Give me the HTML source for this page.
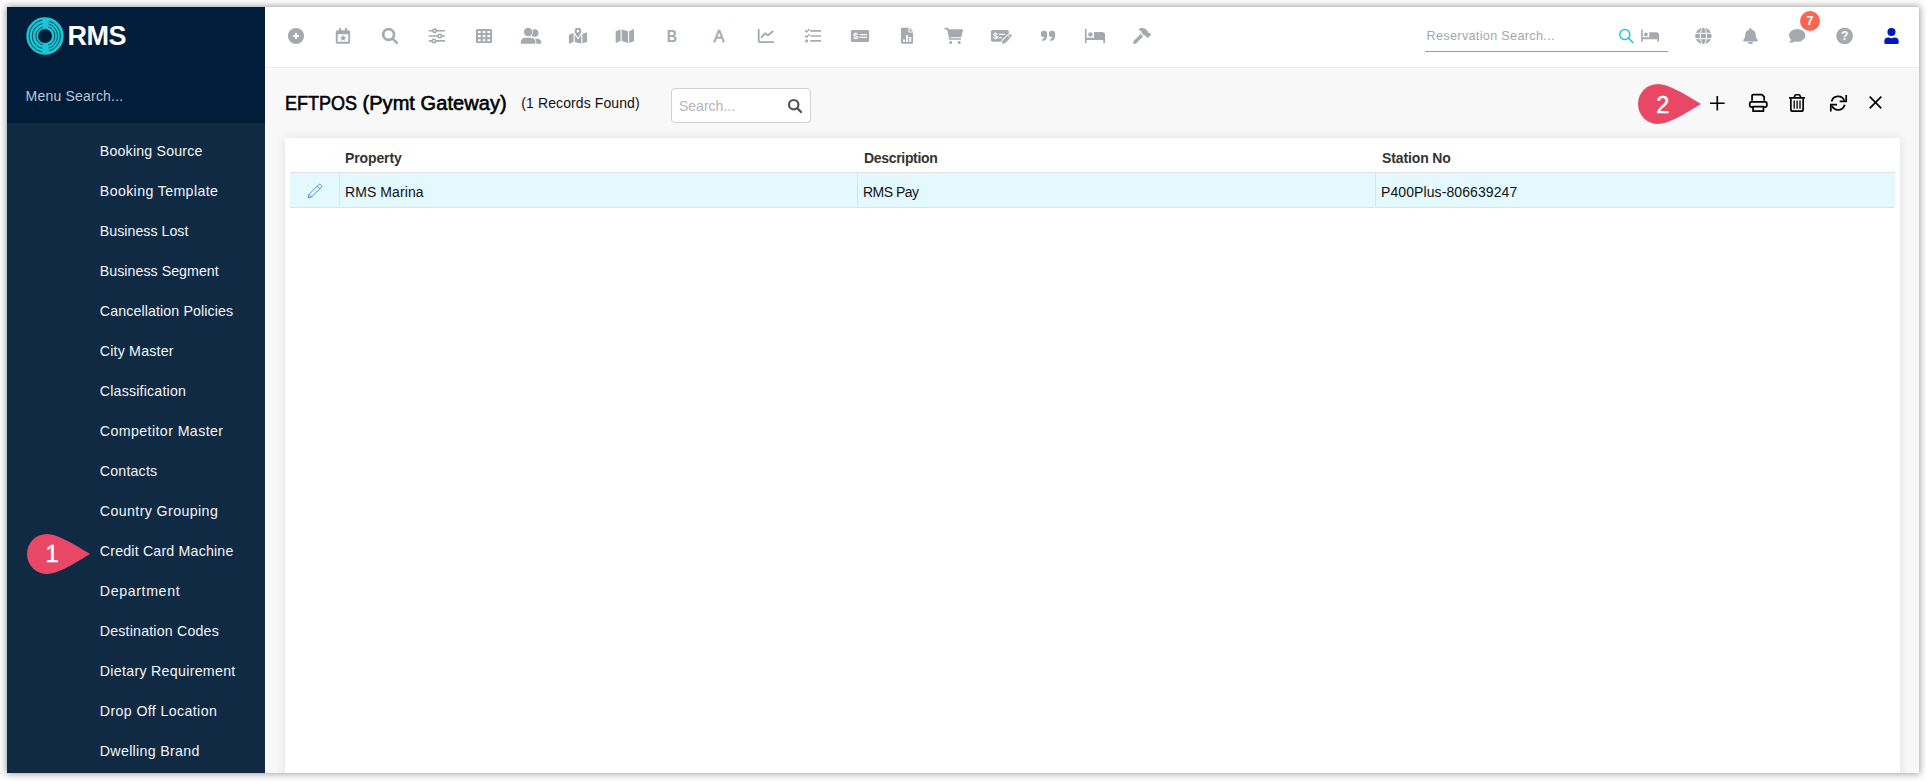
<!DOCTYPE html>
<html lang="en">
<head>
<meta charset="utf-8">
<title>EFTPOS (Pymt Gateway)</title>
<style>
*{box-sizing:border-box;margin:0;padding:0}
html,body{width:1927px;height:781px;overflow:hidden;background:#fff}
body{font-family:"Liberation Sans",sans-serif;color:#111;position:relative}
#frame{position:absolute;left:7px;top:7px;width:1912px;height:766px;background:#f8f8f9;overflow:hidden}
#shadow{position:absolute;left:7px;top:7px;width:1912px;height:766px;box-shadow:0 0 7px 1px rgba(0,0,0,.38)}
/* sidebar */
#side{position:absolute;left:0;top:0;width:258px;height:766px;background:#102a43}
#sidehead{position:absolute;left:0;top:0;width:258px;height:116px;background:#011d39}
#logotext{position:absolute;left:60.5px;top:13.6px;font-weight:700;font-size:27px;line-height:30px;color:#fff;letter-spacing:-.45px}
#msearch{position:absolute;left:18.6px;top:79.1px;font-size:14px;line-height:20px;color:#bcc6d1;letter-spacing:.2px}
#menu{position:absolute;left:0;top:116px;width:258px;list-style:none}
#menu li{height:40px;line-height:20px;padding:17.9px 0 0 92.8px;font-size:14.2px;letter-spacing:.19px;color:#f2f5f8;white-space:nowrap}
/* topbar */
#top{position:absolute;left:258px;top:0;width:1654px;height:61px;background:#fff;border-bottom:1px solid #ececf1}
.ti{position:absolute;top:17px;width:24px;height:24px;margin-left:-12px}
.ti svg{display:block;width:24px;height:24px;fill:#a6a9af}
.tx{font-size:16.5px;line-height:25px;text-align:center;color:#a6a9af}
#badge{position:absolute;left:1535.1px;top:3.9px;width:20px;height:20px;border-radius:50%;background:#ff6450;color:#fff;font-weight:700;font-size:12.5px;line-height:21px;text-align:center}
#rsearch{position:absolute;left:1160px;top:16px;width:243px;height:29px;border-bottom:1px solid #9a9da6}
#rsearch span{position:absolute;left:1.6px;top:5px;font-size:12.6px;letter-spacing:.34px;line-height:16px;color:#a3a6ad;white-space:nowrap}
/* content */
#title{position:absolute;left:278.2px;top:82.3px;font-size:20px;line-height:28px;font-weight:400;-webkit-text-stroke:.6px #000;color:#000;white-space:nowrap;letter-spacing:-.3px}
#count{position:absolute;left:514.3px;top:86.3px;font-size:14px;letter-spacing:.1px;line-height:20px;color:#111;white-space:nowrap}
#gsearch{position:absolute;left:664px;top:81px;width:140px;height:35px;border:1px solid #cfd1d4;border-radius:4px;background:#fff}
#gsearch span{position:absolute;left:7px;top:8px;font-size:14px;line-height:18px;color:#b3b5ba}
#card{position:absolute;left:278px;top:131px;width:1615px;height:700px;background:#fff;box-shadow:0 0 10px rgba(0,0,0,.1)}
.th{position:absolute;top:10px;font-size:14px;line-height:20px;font-weight:700;color:#333;white-space:nowrap;letter-spacing:-.12px}
#row{position:absolute;left:5px;top:34px;width:1605px;height:36px;background:#e4f9fe;border-top:1px solid #e8e0e0;border-bottom:1px solid #e8e0e0}
.td{position:absolute;top:0;height:34px;border-left:1px solid #e8e0e0;padding:10px 0 0 5px;font-size:14px;letter-spacing:.09px;line-height:18px;color:#111;white-space:nowrap}
.ai{position:absolute;top:84px;width:24px;height:24px;margin-left:-12px}
.ai svg{display:block;width:24px;height:24px}
.marker{position:absolute;width:62px;height:40px}
.marker svg{display:block}
</style>
</head>
<body>
<div id="shadow"></div>
<div id="frame">
  <div id="side">
    <div id="sidehead">
      <svg id="logo" style="position:absolute;left:18.3px;top:8.85px" width="40" height="40" viewBox="-20 -20 40 40">
        <circle r="12.85" fill="none" stroke="#1cc5d1" stroke-width="11.7"/>
        <g fill="none" stroke="#022f4b" stroke-width=".85">
          <path d="M-2.8 -16A16.3 16.3 0 0 0 -2.8 16"/>
          <path d="M-2.6 -12.4A12.65 12.65 0 0 0 -2.6 12.4"/>
          <path d="M-2.2 -8.8A9.05 9.05 0 0 0 -2.2 8.8"/>
          <path d="M3.3 -9.1A9.65 9.65 0 0 1 3.3 9.1"/>
          <path d="M3.6 -12.1A12.65 12.65 0 0 1 3.6 12.1"/>
          <path d="M4 -14.9A15.45 15.45 0 0 1 4 14.9"/>
        </g>
      </svg>
      <div id="logotext">RMS</div>
      <div id="msearch">Menu Search...</div>
    </div>
    <ul id="menu">
      <li>Booking Source</li>
      <li style="letter-spacing:0.37px">Booking Template</li>
      <li style="letter-spacing:0.02px">Business Lost</li>
      <li style="letter-spacing:0.04px">Business Segment</li>
      <li style="letter-spacing:0.12px">Cancellation Policies</li>
      <li>City Master</li>
      <li>Classification</li>
      <li style="letter-spacing:0.41px">Competitor Master</li>
      <li>Contacts</li>
      <li style="letter-spacing:0.4px">Country Grouping</li>
      <li>Credit Card Machine</li>
      <li style="letter-spacing:0.63px">Department</li>
      <li>Destination Codes</li>
      <li style="letter-spacing:0.3px">Dietary Requirement</li>
      <li style="letter-spacing:0.38px">Drop Off Location</li>
      <li style="letter-spacing:0.32px">Dwelling Brand</li>
    </ul>
    <div class="marker" style="left:19.6px;top:527px">
      <svg width="64" height="40" viewBox="0 0 64 40"><path d="M20 0C30 0 45 9 63 20C45 31 30 40 20 40A20 20 0 0 1 20 0Z" fill="#e84866"/><text x="25" y="28.3" font-family="Liberation Sans, sans-serif" font-size="23.5" fill="#fff" stroke="#fff" stroke-width=".5" text-anchor="middle">1</text></svg>
    </div>
  </div>
  <div style="position:absolute;left:258px;top:0;width:1px;height:766px;background:#fff"></div>
  <div id="top">
    <!-- toolbar icons: each 24x24 box centred on icon centre -->
    <div class="ti" style="left:31px"><svg viewBox="0 0 24 24"><circle cx="12" cy="12" r="8.1"/><path d="M9.1 11h1.9V9.1h2V11h1.9v2H13v1.9h-2V13H9.1z" fill="#fff"/></svg></div>
    <div class="ti" style="left:78px"><svg viewBox="0 0 24 24"><path fill-rule="evenodd" d="M8 4h2v2.3h4V4h2v2.3h1.6a1.6 1.6 0 0 1 1.6 1.6v10.3a1.6 1.6 0 0 1-1.6 1.6H6.4a1.6 1.6 0 0 1-1.6-1.6V7.9a1.6 1.6 0 0 1 1.6-1.6H8zM6.7 10.2v7.6h10.6v-7.6z"/><path d="M12 10.9l.95 1.95 2.15.3-1.55 1.5.37 2.15L12 15.8l-1.92 1 .37-2.15-1.55-1.5 2.15-.3z"/></svg></div>
    <div class="ti" style="left:125px"><svg viewBox="0 0 24 24"><circle cx="10.6" cy="10.5" r="5.4" fill="none" stroke="#a6a9af" stroke-width="2.7"/><path d="M14.6 14.6l4.3 4.3" stroke="#a6a9af" stroke-width="2.6" stroke-linecap="round"/></svg></div>
    <div class="ti" style="left:172px"><svg viewBox="0 0 24 24"><g fill="none" stroke="#a6a9af" stroke-width="1.6"><path d="M3.8 6.8H20M3.8 12H20M3.8 16.9H20"/><circle cx="9.7" cy="6.8" r="1.7" fill="#fff"/><circle cx="14.8" cy="12" r="1.7" fill="#fff"/><circle cx="8.9" cy="16.9" r="1.7" fill="#fff"/></g></svg></div>
    <div class="ti" style="left:219px"><svg viewBox="0 0 24 24"><path fill-rule="evenodd" d="M5.4 5.1h13.2A1.5 1.5 0 0 1 20.1 6.6v10.8a1.5 1.5 0 0 1-1.5 1.5H5.4a1.5 1.5 0 0 1-1.5-1.5V6.6A1.5 1.5 0 0 1 5.4 5.1zM6 6.9v2.2h2.7V6.9zM10.7 6.9v2.2h2.7V6.9zM15.4 6.9v2.2h2.7V6.9zM6 11.1v2.2h2.7v-2.2zM10.7 11.1v2.2h2.7v-2.2zM15.4 11.1v2.2h2.7v-2.2zM6 15.3v2h2.7v-2zM10.7 15.3v2h2.7v-2zM15.4 15.3v2h2.7v-2z"/></svg></div>
    <div class="ti" style="left:266px"><svg viewBox="0 0 24 24"><circle cx="15.7" cy="9.1" r="3.8"/><path d="M12.6 19.7c0-3.2 1-4.9 3.9-4.9h1.7c2.7 0 4.1 1.7 4.1 3.9v0.2a0.8 0.8 0 0 1-0.8 0.8z"/><circle cx="9.1" cy="8" r="4.8" fill="#fff"/><path d="M0.9 20.5v-2c0-3.2 2.2-5.6 5.3-5.6h5.8c3.1 0 5.3 2.4 5.3 5.6v2z" fill="#fff"/><circle cx="9.1" cy="8" r="4.2"/><path d="M1.7 18.5c0-2.8 1.9-4.8 4.6-4.8h5.6c2.7 0 4.6 2 4.6 4.8v0.4a0.8 0.8 0 0 1-0.8 0.8H2.5a0.8 0.8 0 0 1-0.8-0.8z"/></svg></div>
    <div class="ti" style="left:313px"><svg viewBox="0 0 24 24"><path d="M2.9 10.8L7.5 9.1v8.9L2.9 19.7zM8.7 9.4h6.6v10.3L8.7 17.9zM16.4 10L21.1 8.3v9.5l-4.7 1.8z"/><path d="M12 3.8a3.3 3.3 0 0 1 3.3 3.3c0 2-2 4.9-3.3 6.6c-1.3-1.7-3.3-4.6-3.3-6.6A3.3 3.3 0 0 1 12 3.8z" fill="#fff" stroke="#fff" stroke-width="2.2"/><path fill-rule="evenodd" d="M12 3.8a3.3 3.3 0 0 1 3.3 3.3c0 2-2 4.9-3.3 6.6c-1.3-1.7-3.3-4.6-3.3-6.6A3.3 3.3 0 0 1 12 3.8zM12 5.8a1.3 1.3 0 1 0 0 2.6a1.3 1.3 0 0 0 0-2.6z"/></svg></div>
    <div class="ti" style="left:360px"><svg viewBox="0 0 24 24"><path d="M2.7 7.2L7.6 5.4v11.7L2.7 18.9zM8.7 5.4L15 7.2v11.8L8.7 17.1zM16.1 7.2L21 5v12.3l-4.9 1.7z"/></svg></div>
    <div class="ti tx" style="left:407px;font-weight:700;transform:scaleX(.86)">B</div>
    <div class="ti tx" style="left:454px;-webkit-text-stroke:.5px #a6a9af">A</div>
    <div class="ti" style="left:501px"><svg viewBox="0 0 24 24"><path d="M4.7 4.9v11.6a1.6 1.6 0 0 0 1.6 1.6H20" fill="none" stroke="#a6a9af" stroke-width="1.8"/><path d="M7.6 13.2l3.8-4l2.3 2.2l4.9-4" fill="none" stroke="#a6a9af" stroke-width="1.9" stroke-linejoin="round" stroke-linecap="round"/></svg></div>
    <div class="ti" style="left:548px"><svg viewBox="0 0 24 24"><g fill="none" stroke="#a6a9af"><path d="M9.3 6.8H20M9.3 12H20M9.3 16.9H20" stroke-width="1.7"/><path d="M4 6.5l1.5 1.5l2.9-3M4 11.7l1.5 1.5l2.9-3" stroke-width="1.5"/></g><circle cx="5.6" cy="16.9" r="1.6"/></svg></div>
    <div class="ti" style="left:595px"><svg viewBox="0 0 24 24"><rect x="2.9" y="5.9" width="18.2" height="12.1" rx="1.7"/><path d="M11.6 10h7.4v1.3h-7.4zM11.6 12.7h7.4v1.3h-7.4z" fill="#fff"/><text x="7.6" y="15.3" font-family="Liberation Sans, sans-serif" font-weight="700" font-size="9.5" fill="#fff" text-anchor="middle">$</text></svg></div>
    <div class="ti" style="left:642px"><svg viewBox="0 0 24 24"><path fill-rule="evenodd" d="M7.1 3.8h6.4v4.6h4.6v10.2a1.2 1.2 0 0 1-1.2 1.2H7.1a1.2 1.2 0 0 1-1.2-1.2V5a1.2 1.2 0 0 1 1.2-1.2zM8 15.4v2.6h2v-2.6zM11.1 11.2v6.8h2v-6.8zM14.2 12.9v5.1h2v-5.1z"/><path d="M14.5 3.8l3.6 3.6h-3.6z"/></svg></div>
    <div class="ti" style="left:689px"><svg viewBox="0 0 24 24"><path d="M2.6 3.8h3.2a.8.8 0 0 1 .8.6l.2.9h13.4a.8.8 0 0 1 .8 1l-1.5 6.3a.8.8 0 0 1-.8.6H8.3l.2 1.1h9.9a.75.75 0 0 1 0 1.5H7.3L5.2 5.4H2.6z"/><circle cx="8.6" cy="18.5" r="1.5"/><circle cx="17.2" cy="18.5" r="1.5"/></svg></div>
    <div class="ti" style="left:736px"><svg viewBox="0 0 24 24"><rect x="1.9" y="6" width="17.9" height="11.7" rx="1.7"/><path d="M9.8 9.8h6.1v1.3H9.8zM9.8 12.9h3v1.3h-3z" fill="#fff"/><text x="6.4" y="15.3" font-family="Liberation Sans, sans-serif" font-weight="700" font-size="9.5" fill="#fff" text-anchor="middle">$</text><path d="M12.9 19.8L13.5 16.7L19.8 10.4A1.8 1.8 0 0 1 22.3 12.9L16 19.2Z" fill="#fff" stroke="#fff" stroke-width="1.8" stroke-linejoin="round"/><path d="M12.9 19.8L13.5 16.7L18.6 11.5L21.2 14.1L16 19.2ZM19.1 11.1L19.8 10.4A1.8 1.8 0 0 1 22.3 12.9L21.6 13.6Z"/></svg></div>
    <div class="ti" style="left:783px"><svg viewBox="0 0 24 24"><circle cx="8" cy="10" r="3.15"/><path d="M11.15 9.9v1.8c0 3-1.7 5-4.3 5.2a.5.5 0 0 1-.5-.5v-1.2a.5.5 0 0 1 .4-.5c1.3-.3 2-1.2 2-2.6v-1z"/><circle cx="16" cy="10" r="3.15"/><path d="M19.15 9.9v1.8c0 3-1.7 5-4.3 5.2a.5.5 0 0 1-.5-.5v-1.2a.5.5 0 0 1 .4-.5c1.3-.3 2-1.2 2-2.6v-1z"/></svg></div>
    <div class="ti" style="left:830px"><svg viewBox="0 0 24 24"><path d="M1.9 4.9h1.7v8.8h7.4V8h8a3.1 3.1 0 0 1 3.1 3.1V19h-1.9v-3H3.6v3H1.9z"/><circle cx="7.4" cy="10.4" r="2.2"/></svg></div>
    <div class="ti" style="left:877px"><svg viewBox="0 0 24 24"><path d="M11.9 11.2L5.1 18" fill="none" stroke="#a6a9af" stroke-width="3.4"/><circle cx="4.9" cy="18.2" r="1.7"/><path d="M8.4 5.4C9.5 4.3 11 3.9 12.4 3.9C14.6 3.9 16.6 5.4 17.9 7.4L18.6 9.3L19.9 8.8L21.2 10.4L17.9 13.9L16.2 12.9L16.5 11.9C15 11.6 13.5 11 12.7 10.2C11.8 9.3 11.6 8.1 10.8 7C10.2 6.3 9.3 5.8 8.4 5.4Z"/></svg></div>
    <div class="ti" style="left:1361px"><svg viewBox="-0.3 0 24 24"><circle cx="10.5" cy="10.5" r="5" fill="none" stroke="#22c4d3" stroke-width="1.4"/><path d="M14.1 14.1l4.4 4.4" stroke="#22c4d3" stroke-width="1.5" stroke-linecap="round"/></svg></div>
    <div class="ti" style="left:1385px"><svg viewBox="0 0 24 24"><path d="M3.1 5.6h1.6v7.6h6.5V8.3h7.1a2.7 2.7 0 0 1 2.7 2.7v6.7h-1.7v-2.5H4.7v2.5H3.1z"/><circle cx="7.9" cy="10.4" r="1.9"/></svg></div>
    <div class="ti" style="left:1438px"><svg viewBox="-0.4 0 24 24"><circle cx="12" cy="12" r="8.2"/><g fill="none" stroke="#fff" stroke-width="1"><path d="M3 9.3h18M3 14.7h18"/><ellipse cx="12" cy="12" rx="3.1" ry="8.7"/></g></svg></div>
    <div class="ti" style="left:1485px"><svg viewBox="-0.5 0 24 24"><path d="M12 3.9a1 1 0 0 1 1 1v.5c2.5.5 4.2 2.6 4.2 5.2c0 2.9.9 4 1.7 4.9c.3.3.4.6.4.9a1 1 0 0 1-1 1H5.7a1 1 0 0 1-1-1c0-.3.1-.6.4-.9c.8-.9 1.7-2 1.7-4.9c0-2.6 1.7-4.7 4.2-5.2v-.5a1 1 0 0 1 1-1zM9.4 18.1h5.2a2.6 2.1 0 0 1-5.2 0z"/></svg></div>
    <div class="ti" style="left:1532px"><svg viewBox="-0.1 0 24 24"><ellipse cx="12.1" cy="11.4" rx="8.2" ry="6.4"/><path d="M6.5 14.5c-.4 1.5-1.4 3.3-2.8 4.3c2.3.2 4.7-.6 6.2-1.9z"/></svg></div>
    <div id="badge">7</div>
    <div class="ti" style="left:1579px"><svg viewBox="-0.6 0 24 24"><circle cx="12" cy="12" r="8.35"/><text x="12" y="16.3" font-family="Liberation Sans, sans-serif" font-weight="700" font-size="12" fill="#fff" text-anchor="middle">?</text></svg></div>
    <div class="ti" style="left:1626px"><svg viewBox="-0.5 0 24 24" style="fill:#0019c5"><circle cx="12" cy="8" r="4.05"/><path d="M9.1 13.6c.9.4 1.9.6 2.9.6s2-.2 2.9-.6h.4a3.9 3.9 0 0 1 3.9 3.9v.9a1.5 1.5 0 0 1-1.5 1.5H6.3a1.5 1.5 0 0 1-1.5-1.5v-.9a3.9 3.9 0 0 1 3.9-3.9z"/></svg></div>
    <div id="rsearch"><span>Reservation Search...</span></div>
  </div>
  <div id="title"><span style="display:inline-block;letter-spacing:0;transform:scaleX(.9);transform-origin:0 50%;margin-right:-8px">EFTPOS</span> <span style="letter-spacing:.06px">(Pymt Gateway)</span></div>
  <div id="count">(1 Records Found)</div>
  <div id="gsearch"><span>Search...</span><svg style="position:absolute;left:113px;top:7px" width="20" height="20" viewBox="0 0 20 20"><circle cx="8.7" cy="8.7" r="4.7" fill="none" stroke="#555" stroke-width="2.2"/><path d="M12.2 12.2l3.8 3.8" stroke="#555" stroke-width="2.4" stroke-linecap="round"/></svg></div>
  <div class="marker" style="left:1630.7px;top:77px">
    <svg width="64" height="40" viewBox="0 0 64 40"><path d="M20 0C30 0 45 9 63 20C45 31 30 40 20 40A20 20 0 0 1 20 0Z" fill="#e84866"/><text x="24.8" y="28.6" font-family="Liberation Sans, sans-serif" font-size="23.5" fill="#fff" stroke="#fff" stroke-width=".5" text-anchor="middle">2</text></svg>
  </div>
  <div class="ai" style="left:1710px;top:84px"><svg viewBox="-0.3 -0.2 24 24"><path d="M4.7 12H19.3M12 4.7V19.3" stroke="#000" stroke-width="1.6" fill="none"/></svg></div>
  <div class="ai" style="left:1751px;top:84px"><svg viewBox="-0.3 0 24 24"><g fill="none" stroke="#000" stroke-width="1.7" stroke-linejoin="round"><path d="M5.75 9.8V4.65a1 1 0 0 1 1-1h8.9l2.25 2.25V9.8"/><rect x="3.45" y="10.9" width="17.1" height="5.3" rx="1.6" fill="#f8f8f9"/><rect x="6.75" y="15.55" width="10.4" height="4.6" fill="#f8f8f9"/></g></svg></div>
  <div class="ai" style="left:1790px;top:84px"><svg viewBox="-0.4 0 24 24"><g fill="none" stroke="#000" stroke-width="1.7"><path d="M3.6 6.9H19.6" /><path d="M8.5 6.8l1.3-2.6a1 1 0 0 1 .9-.5h2.7a1 1 0 0 1 .9.5l1.3 2.6" stroke-width="1.6"/><path d="M5.45 7.5V18.15a2 2 0 0 0 2 2h8.3a2 2 0 0 0 2-2V7.5"/><path d="M8.8 9.4v8.3M11.7 9.4v8.3M14.6 9.4v8.3" stroke-width="1.3"/></g></svg></div>
  <div class="ai" style="left:1831px;top:84px"><svg viewBox="-0.2 -0.4 24 24"><g fill="none" stroke="#000" stroke-width="1.7"><path d="M5.4 10.1A6.75 6.75 0 0 1 18.2 9.3"/><path d="M20 3.5V9.9H13.5" stroke-linejoin="miter"/><path d="M18.5 13.3A6.75 6.75 0 0 1 5.8 14.5"/><path d="M4.6 20.1V13.3H10.8" stroke-linejoin="miter"/></g></svg></div>
  <div class="ai" style="left:1868px;top:83px"><svg viewBox="-0.5 -0.5 24 24"><path d="M6.2 6.2L17.8 17.8M17.8 6.2L6.2 17.8" stroke="#000" stroke-width="1.7" fill="none"/></svg></div>
  <div id="card">
    <div class="th" style="left:60px">Property</div>
    <div class="th" style="left:579px;letter-spacing:-.32px">Description</div>
    <div class="th" style="left:1097px">Station No</div>
    <div id="row">
      <svg style="position:absolute;left:12.7px;top:5.9px" width="24" height="24" viewBox="0 0 24 24"><g fill="none" stroke="#4b8fd6" stroke-width="1" stroke-linejoin="round"><path d="M5 19l1-3.6L15.6 5.8a1.5 1.5 0 0 1 2.1 0l.5.5a1.5 1.5 0 0 1 0 2.1L8.6 18z"/><path d="M6 15.4L8.6 18M14.3 7.1l2.6 2.6"/></g></svg>
      <div class="td" style="left:49px;width:519px">RMS Marina</div>
      <div class="td" style="left:567px;width:519px;letter-spacing:-.5px">RMS Pay</div>
      <div class="td" style="left:1085px;width:520px">P400Plus-806639247</div>
    </div>
  </div>
</div>
</body>
</html>
